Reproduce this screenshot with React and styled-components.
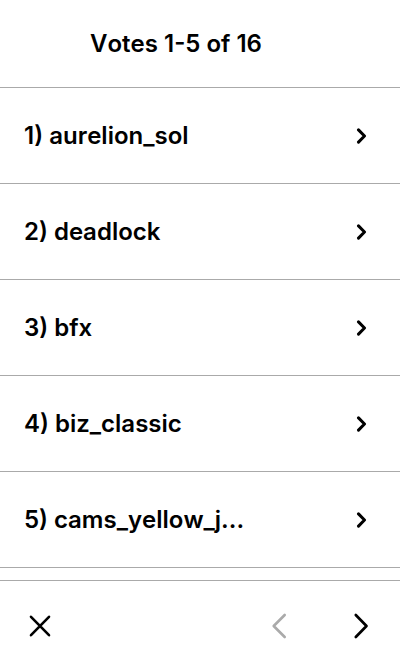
import React from "react";
import styled, { createGlobalStyle } from "styled-components";

const GlobalStyle = createGlobalStyle`
  *, *::before, *::after { box-sizing: border-box; }
  body {
    margin: 0;
    background: #fff;
    color: #000;
    font-family: Inter, "Liberation Sans", sans-serif;
    font-kerning: none;
  }
`;

const Page = styled.div`
  display: flex;
  flex-direction: column;
  min-height: 100vh;
`;

const Header = styled.header`
  display: flex;
  align-items: center;
  justify-content: center;
  padding: 28px 72px 28px 24px;
  border-bottom: 1px solid #aaa;
`;

const Title = styled.h1`
  margin: 0;
  font-size: 24px;
  line-height: 31px;
  font-weight: 600;
`;

const List = styled.ul`
  flex: 1;
  margin: 0;
  padding: 0;
  list-style: none;
`;

const Row = styled.button`
  display: flex;
  align-items: center;
  justify-content: space-between;
  width: 100%;
  height: 96px;
  padding: 0 32px 0 24px;
  border: 0;
  border-bottom: 1px solid #aaa;
  background: none;
  color: inherit;
  font-family: inherit;
  font-size: 24px;
  line-height: 32px;
  font-weight: 600;
  font-kerning: none;
  text-align: left;
  cursor: pointer;
`;

const Footer = styled.footer`
  display: flex;
  align-items: center;
  justify-content: space-between;
  padding: 29px 24px 30px;
  border-top: 1px solid #aaa;
`;

const Pager = styled.nav`
  display: flex;
  gap: 50px;
`;

const IconButton = styled.button`
  display: flex;
  padding: 2px;
  border: 0;
  background: none;
  color: #000;
  cursor: pointer;
  &:disabled { color: #aaa; cursor: default; }
`;

const Icon = ({ size, stroke, d }) => (
  <svg
    width={size}
    height={size}
    viewBox={`0 0 ${size} ${size}`}
    fill="none"
    stroke="currentColor"
    strokeWidth={stroke}
    strokeLinecap="round"
    strokeLinejoin="round"
    aria-hidden="true"
  >
    <path d={d} />
  </svg>
);

const votes = ["aurelion_sol", "deadlock", "bfx", "biz_classic", "cams_yellow_j..."];

export default function App() {
  return (
    <Page>
      <GlobalStyle />
      <Header><Title>Votes 1-5 of 16</Title></Header>
      <List>
        {votes.map((name, i) => (
          <li key={name}>
            <Row>
              {i + 1}) {name}
              <Icon size={16} stroke={3} d="M6.5 1.9L12.5 8L6.5 14.1" />
            </Row>
          </li>
        ))}
      </List>
      <Footer>
        <IconButton aria-label="Close"><Icon size={28} stroke={2.6} d="M5 4.8L23 23.2M23 4.8L5 23.2" /></IconButton>
        <Pager aria-label="Pages">
          <IconButton aria-label="Previous page" disabled><Icon size={28} stroke={2.6} d="M20.7 3L9.7 14L20.7 25" /></IconButton>
          <IconButton aria-label="Next page"><Icon size={28} stroke={2.7} d="M9.8 3L20.5 14L9.8 25" /></IconButton>
        </Pager>
      </Footer>
    </Page>
  );
}
